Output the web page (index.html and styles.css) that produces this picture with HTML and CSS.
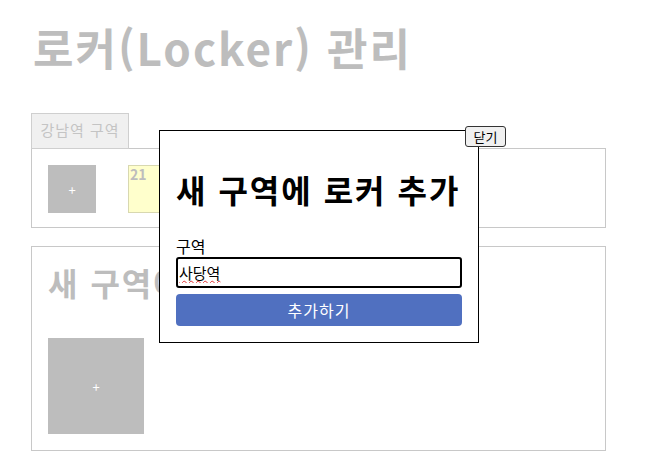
FILE: index.html
```html
<!DOCTYPE html>
<html lang="ko">
<head>
<meta charset="utf-8">
<title>로커 관리</title>
<link rel="stylesheet" href="styles.css">
</head>
<body>
<main class="page">
  <h1 class="title">로커(Locker) 관리</h1>
  <div class="tabs"><span class="tab">강남역 구역</span></div>
  <section class="card card-zone">
    <div class="lockers">
      <div class="locker add">+</div>
      <div class="locker used"><span class="num">21</span></div>
    </div>
  </section>
  <section class="card card-new">
    <h2 class="card-title">새 구역에 로커 추가</h2>
    <div class="locker big add">+</div>
  </section>

  <div class="modal">
    <button class="close" type="button">닫기</button>
    <h2 class="modal-title">새 구역에 로커 추가</h2>
    <label class="label" for="zone">구역</label>
    <input class="input" id="zone" type="text" value="사당역">
    <button class="submit" type="button">추가하기</button>
  </div>
</main>
</body>
</html>
```

FILE: styles.css
```css
* { box-sizing: border-box; }
html, body { margin: 0; padding: 0; background: #fff; }
body { font-family: "Noto Sans CJK KR", "Noto Sans", sans-serif; }

.page {
  position: relative;
  padding: 14px 57px 0 31px;
}

.title {
  margin: 0 0 33px 2px;
  font-size: 44px;
  line-height: 66px;
  letter-spacing: 2px;
  font-weight: 700;
  color: #bdbdbd;
}

.tabs { display: flex; }
.tab {
  display: block;
  width: 98px;
  height: 36px;
  margin-bottom: -1px;
  border: 1px solid #cfcfcf;
  background: #f0f0f0;
  color: #c4c4c4;
  font-size: 15px;
  letter-spacing: 1px;
  line-height: 32px;
  text-align: center;
}

.card {
  border: 1px solid #c8c8c8;
  padding: 16px;
}
.card-zone { height: 80px; }
.card-new { height: 205px; margin-top: 18px; }

.lockers { display: flex; gap: 32px; }
.locker {
  width: 48px;
  height: 48px;
  background: #bdbdbd;
  color: #fff;
  font-size: 13px;
  display: flex;
  align-items: center;
  justify-content: center;
}
.locker.used {
  background: #ffffcc;
  border: 1px solid #d8d8b0;
  align-items: flex-start;
  justify-content: flex-start;
}
.num {
  font-size: 14px;
  font-weight: 700;
  color: #bdbdbd;
  line-height: 16px;
  padding-left: 1px;
}
.locker.big { width: 96px; height: 96px; }

.card-title {
  margin: 0 0 37px;
  font-size: 32px;
  line-height: 38px;
  letter-spacing: 2px;
  font-weight: 700;
  color: #bdbdbd;
}

.modal {
  position: absolute;
  left: 159px;
  top: 130px;
  width: 320px;
  height: 213px;
  background: #fff;
  border: 1px solid #000;
  padding: 16px 16px 16px;
  display: flex;
  flex-direction: column;
}
.close {
  position: absolute;
  top: -5px;
  right: -28px;
  width: 41px;
  height: 21px;
  padding: 0;
  border: 1px solid #333;
  border-radius: 3px;
  background: #f0f0f0;
  font-family: "Noto Sans CJK KR", sans-serif;
  font-size: 13px;
  line-height: 18px;
  color: #000;
}
.modal-title {
  margin: 22px 0 27px;
  font-size: 32px;
  line-height: 40px;
  letter-spacing: 2px;
  font-weight: 700;
  color: #000;
}
.label {
  font-size: 16px;
  line-height: 20px;
  color: #000;
}
.input {
  margin-top: 1px;
  width: 100%;
  height: 31px;
  border: 2px solid #000;
  border-radius: 3px;
  padding: 0 1px;
  font-family: "Noto Sans CJK KR", sans-serif;
  font-size: 15px;
  color: #000;
  text-decoration: underline wavy #e03030;
  text-decoration-thickness: 1px;
  outline: none;
}
.submit {
  margin-top: 6px;
  width: 100%;
  height: 32px;
  border: 0;
  border-radius: 4px;
  background: #5070c0;
  color: #fff;
  font-family: "Noto Sans CJK KR", sans-serif;
  font-size: 16px;
  letter-spacing: 1px;
}
```
